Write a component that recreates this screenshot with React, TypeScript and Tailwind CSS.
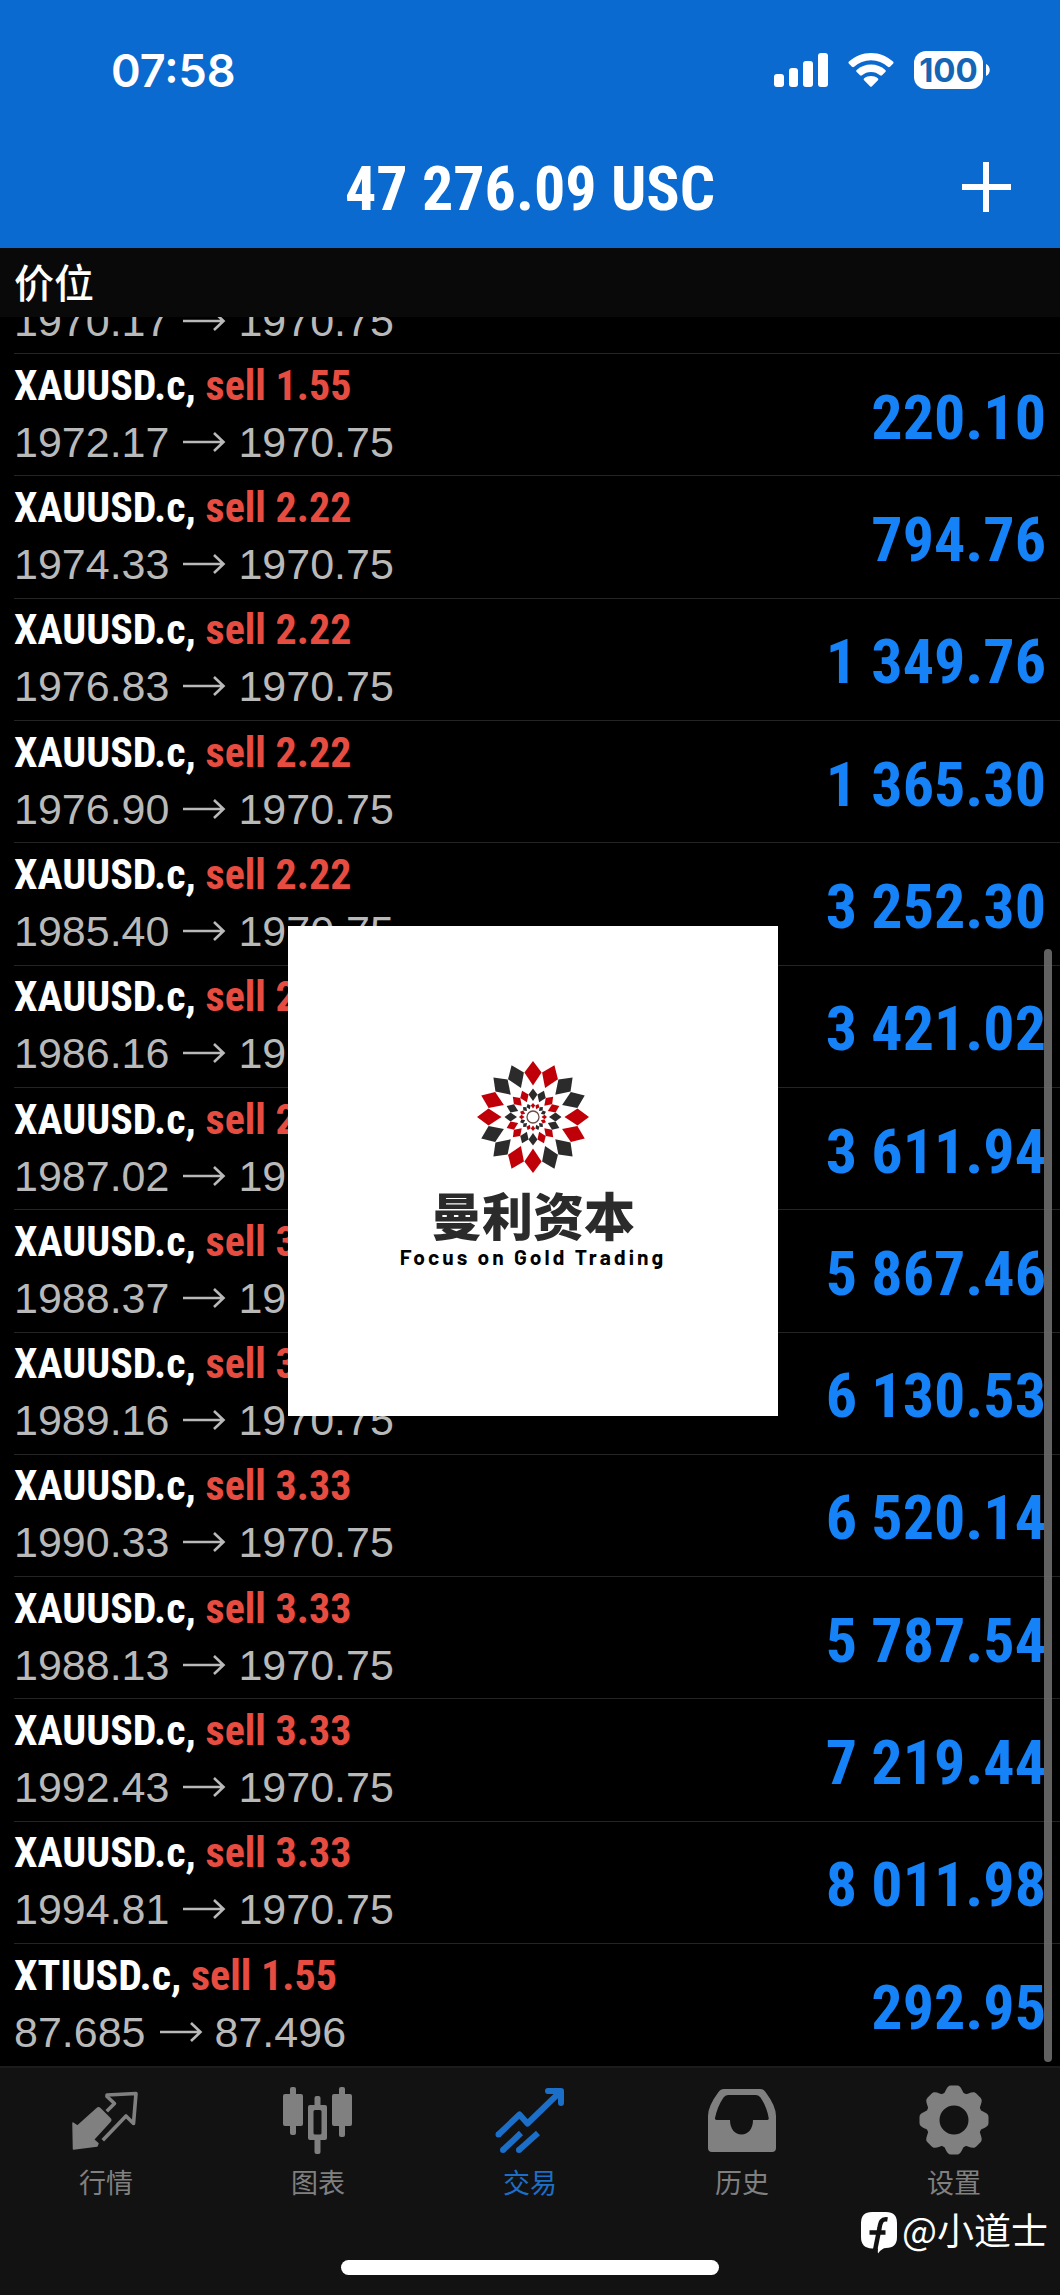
import type { ReactNode } from "react";

type Order = {
  symbol: string;
  side: string;
  open: string;
  current: string;
  profit: string;
};

const sell = (lots: string, open: string, profit: string): Order => ({
  symbol: "XAUUSD.c,",
  side: `sell ${lots}`,
  open,
  current: "1970.75",
  profit,
});

const orders: Order[] = [
  sell("1.55", "1972.17", "220.10"),
  sell("2.22", "1974.33", "794.76"),
  sell("2.22", "1976.83", "1 349.76"),
  sell("2.22", "1976.90", "1 365.30"),
  sell("2.22", "1985.40", "3 252.30"),
  sell("2.22", "1986.16", "3 421.02"),
  sell("2.22", "1987.02", "3 611.94"),
  sell("3.33", "1988.37", "5 867.46"),
  sell("3.33", "1989.16", "6 130.53"),
  sell("3.33", "1990.33", "6 520.14"),
  sell("3.33", "1988.13", "5 787.54"),
  sell("3.33", "1992.43", "7 219.44"),
  sell("3.33", "1994.81", "8 011.98"),
  {
    symbol: "XTIUSD.c,",
    side: "sell 1.55",
    open: "87.685",
    current: "87.496",
    profit: "292.95",
  },
];

function SignalIcon() {
  return (
    <svg className="h-9 w-[54px]" viewBox="0 0 54 36" fill="currentColor" aria-hidden="true">
      <rect x="0" y="22" width="10" height="13" rx="3" />
      <rect x="15" y="16" width="9" height="19" rx="3" />
      <rect x="29" y="9" width="10" height="26" rx="3" />
      <rect x="44" y="1" width="10" height="34" rx="3" />
    </svg>
  );
}

function WifiIcon() {
  return (
    <svg className="h-9 w-[46px]" viewBox="0 0 46 36" fill="currentColor" aria-hidden="true">
      <path d="M23 1C14.500 1 7 4.300 1 9.500C.3 10.200.3 11 1 11.700L4 14.700C4.700 15.300 5.400 15.300 6.100 14.700C10.800 10.600 16.600 8.300 23 8.300C29.400 8.300 35.200 10.600 39.900 14.700C40.600 15.300 41.300 15.300 42 14.700L45 11.700C45.700 11 45.700 10.200 45 9.500C39 4.300 31.500 1 23 1Z" />
      <path d="M23 12.500C17.500 12.500 12.600 14.500 8.700 17.900C8 18.500 8 19.300 8.700 20L12 23.200C12.600 23.800 13.300 23.800 14 23.300C16.500 21.200 19.600 20 23 20C26.400 20 29.500 21.200 32 23.300C32.700 23.800 33.400 23.800 34 23.200L37.300 20C38 19.300 38 18.500 37.300 17.900C33.400 14.500 28.500 12.500 23 12.500Z" />
      <path d="M23 24C20.400 24 18.100 24.900 16.200 26.300C15.500 26.900 15.500 27.600 16.100 28.200L22 34.300C22.700 35 23.300 35 24 34.300L29.900 28.200C30.500 27.600 30.500 26.900 29.800 26.300C27.900 24.900 25.600 24 23 24Z" />
    </svg>
  );
}

function Battery() {
  return (
    <div className="flex items-center gap-[3px]">
      <span className="flex h-[38px] w-[69px] items-center justify-center rounded-xl bg-white text-[33px] leading-none font-bold text-[#1565b4]">
        100
      </span>
      <svg className="h-3 w-1" viewBox="0 0 4 12" fill="currentColor" aria-hidden="true">
        <path d="M0 0C5 2 5 10 0 12Z" />
      </svg>
    </div>
  );
}

function QuotesIcon() {
  return (
    <svg className="size-[72px]" viewBox="0 0 72 72" aria-hidden="true">
      <path
        d="M3 39L7.500 42L27 24.500Q28.500 23 30 24.500L40 34.500Q41.500 36 40 37.500L23.500 55.500L28 59.500L27 62L3.500 65Z"
        fill="currentColor"
        stroke="currentColor"
        strokeWidth="1.500"
        strokeLinejoin="round"
      />
      <path
        d="M38 26L44.500 19.500L37 12.500L37 11L66 9.500L63.500 39.500L56 32L34 55"
        fill="none"
        stroke="currentColor"
        strokeWidth="3.600"
        strokeLinejoin="round"
        strokeLinecap="square"
      />
    </svg>
  );
}

function ChartIcon() {
  return (
    <svg className="size-[72px]" viewBox="0 0 72 72" fill="currentColor" aria-hidden="true">
      <rect x="8" y="3" width="6" height="48" rx="2" />
      <rect x="1" y="10" width="20" height="32" rx="2" />
      <rect x="57" y="3" width="6" height="50" rx="2" />
      <rect x="50" y="10" width="20" height="32" rx="2" />
      <rect x="32.500" y="12" width="6" height="12" rx="2" />
      <rect x="32.500" y="54" width="6" height="16" rx="2" />
      <path
        fillRule="evenodd"
        d="M28 21H43Q45 21 45 23V54Q45 56 43 56H28Q26 56 26 54V23Q26 21 28 21ZM33 26Q31.500 26 31.500 27.500V49Q31.500 50.500 33 50.500H38Q39.500 50.500 39.500 49V27.500Q39.500 26 38 26Z"
      />
    </svg>
  );
}

function TradeIcon() {
  return (
    <svg
      className="size-[72px]"
      viewBox="0 0 72 72"
      fill="none"
      stroke="currentColor"
      strokeWidth="6"
      strokeLinejoin="round"
      aria-hidden="true"
    >
      <path d="M4 51L25.500 30.500L33.500 39.500L66 8" />
      <path d="M54 7H67V19" strokeLinecap="round" />
      <path d="M9 66L27 49" strokeLinecap="butt" />
      <path d="M25 66L44 49" strokeLinecap="butt" />
      <path d="M9 66h0M25 66h0M4.500 50.500h0" strokeLinecap="round" />
    </svg>
  );
}

function HistoryIcon() {
  return (
    <svg className="size-[72px]" viewBox="0 0 72 72" fill="currentColor" aria-hidden="true">
      <path
        fillRule="evenodd"
        d="M18 5H54Q57.500 5 59.500 8Q70 22 70 32V64Q70 68 66 68H6Q2 68 2 64V32Q2 22 12.500 8Q14.500 5 18 5ZM22 11Q19 11 17.500 13.500C13 20 10.500 27 9 34Q8.700 36 10.500 36H24C24 45 29 50.500 35.500 50.500C42 50.500 47 45 47 36H61.500Q63 36 62.700 34C61.500 27 59 20 54.500 13.500Q53 11 50 11Z"
      />
    </svg>
  );
}

const gearAngles = [0, 45, 90, 135, 180, 225, 270, 315];

function SettingsIcon() {
  return (
    <svg className="size-[72px]" viewBox="0 0 72 72" aria-hidden="true">
      <circle cx="36" cy="36" r="21.500" fill="none" stroke="currentColor" strokeWidth="14" />
      {gearAngles.map((angle) => (
        <path
          key={angle}
          transform={`rotate(${angle} 36 36)`}
          fill="currentColor"
          d="M24 12C28 9 28 1.500 33 1.500H39C44 1.500 44 9 48 12L42 16H30Z"
        />
      ))}
    </svg>
  );
}

const petals = Array.from({ length: 16 }, (_, i) => i);

function Rosette() {
  return (
    <svg className="size-28" viewBox="-56 -56 112 112" role="img" aria-label="曼利资本">
      {petals.map((i) => {
        const even = i % 4 < 2;
        const first = even ? "#c00008" : "#2b2b2b";
        const second = even ? "#2b2b2b" : "#c00008";
        return (
          <g key={i} transform={`rotate(${i * 22.5})`}>
            <path d="M0 -56L8.600 -44.500L0 -31.500L-8.600 -44.500Z" fill={first} />
            <path d="M0 -28.500L4.500 -22.500L0 -16L-4.500 -22.500Z" fill={second} />
            <path d="M0 -14L2.200 -11.500L0 -8.500L-2.200 -11.500Z" fill={first} />
          </g>
        );
      })}
      <circle r="6" fill="none" stroke="#6b4a4a" strokeWidth="1.300" />
    </svg>
  );
}

function ArrowRight() {
  return (
    <svg
      className="h-6 w-[45px]"
      viewBox="0 0 45 24"
      fill="none"
      stroke="currentColor"
      strokeWidth="2.600"
      aria-label="→"
      role="img"
    >
      <path d="M2 12H42M33 3L42.500 12L33 21" />
    </svg>
  );
}

function PriceMove({ open, current }: { open: string; current: string }) {
  return (
    <p className="flex items-center gap-3 text-[43px] leading-[52px] text-[#b9b9b9]">
      <span>{open}</span>
      <ArrowRight />
      <span>{current}</span>
    </p>
  );
}

function OrderRow({ order }: { order: Order }) {
  return (
    <li className="ml-3.5 flex min-h-[122px] flex-1 items-center justify-between border-b border-[#242424] pr-3.5 last:border-b-0">
      <div className="flex flex-col gap-1.5">
        <p className="font-['Roboto_Condensed','Roboto',sans-serif] text-[42px] leading-[48px] font-bold whitespace-nowrap text-white">
          {order.symbol} <span className="text-[#e74c41]">{order.side}</span>
        </p>
        <PriceMove open={order.open} current={order.current} />
      </div>
      <p className="pt-1.5 font-['Roboto_Condensed','Roboto',sans-serif] text-[62px] leading-[72px] font-bold whitespace-nowrap text-[#1682f8]">
        {order.profit}
      </p>
    </li>
  );
}

function Tab({ label, active, children }: { label: string; active?: boolean; children: ReactNode }) {
  return (
    <button
      type="button"
      aria-current={active ? "page" : undefined}
      className={
        active
          ? "flex flex-1 flex-col items-center gap-2.5 text-[#1b6fc9]"
          : "flex flex-1 flex-col items-center gap-2.5 text-[#808080]"
      }
    >
      {children}
      <span className="text-[27px] leading-8">{label}</span>
    </button>
  );
}

export default function App() {
  return (
    <div className="flex min-h-screen flex-col bg-black font-['Liberation_Sans','Noto_Sans_CJK_SC',sans-serif] text-white">
      <header className="bg-[#0a6ad0] pb-1.5">
        <div className="flex h-[132px] items-start justify-between pt-[43px] pr-[70px] pl-[111px] font-['Inter',sans-serif]">
          <time className="text-[45px] leading-[56px] font-semibold">07:58</time>
          <div className="flex h-[54px] items-center gap-5">
            <SignalIcon />
            <WifiIcon />
            <Battery />
          </div>
        </div>
        <div className="grid h-[110px] grid-cols-[1fr_auto_1fr] items-center">
          <h1 className="col-start-2 pt-1 font-['Roboto_Condensed','Roboto',sans-serif] text-[62px] leading-[72px] font-bold">
            47 276.09 USC
          </h1>
          <button type="button" aria-label="新订单" className="justify-self-end pr-12">
            <svg className="size-[52px]" viewBox="0 0 52 52" stroke="currentColor" strokeWidth="6" aria-hidden="true">
              <path d="M2 26H51M26 1V51" />
            </svg>
          </button>
        </div>
      </header>

      <main className="relative flex flex-1 flex-col">
        <h2 className="flex h-[69px] items-center bg-[#090909] px-3.5 pb-1 font-['Noto_Sans_CJK_SC',sans-serif] text-[40px] leading-none font-medium">
          价位
        </h2>
        <div className="ml-3.5 flex h-[37px] flex-col justify-end overflow-hidden border-b border-[#242424] pb-1.5">
          <PriceMove open="1970.17" current="1970.75" />
        </div>
        <ul className="flex flex-1 flex-col">
          {orders.map((order) => (
            <OrderRow key={order.open} order={order} />
          ))}
        </ul>

        <div className="absolute top-[701px] right-2 bottom-1 w-2 rounded-full bg-[#6b6b6b]/90" />

        <figure className="absolute top-[678px] left-[288px] flex h-[490px] w-[490px] flex-col items-center bg-white pt-[135px]">
          <Rosette />
          <figcaption className="flex flex-col items-center">
            <span className="mt-2.5 font-['Noto_Sans_CJK_SC',sans-serif] text-[51px] leading-[62px] font-black text-[#2b2b2b]">
              曼利资本
            </span>
            <span className="font-['Barlow','Inter',sans-serif] text-[21px] leading-6 font-bold tracking-[3px] whitespace-nowrap text-black">
              Focus on Gold Trading
            </span>
          </figcaption>
        </figure>
      </main>

      <nav className="relative flex h-[229px] flex-col justify-between border-t-2 border-[#1b1b1b] bg-[#121212] pt-4 pb-5 font-['Noto_Sans_CJK_SC',sans-serif]">
        <div className="flex">
          <Tab label="行情">
            <QuotesIcon />
          </Tab>
          <Tab label="图表">
            <ChartIcon />
          </Tab>
          <Tab label="交易" active>
            <TradeIcon />
          </Tab>
          <Tab label="历史">
            <HistoryIcon />
          </Tab>
          <Tab label="设置">
            <SettingsIcon />
          </Tab>
        </div>
        <div className="h-[15px] w-[378px] self-center rounded-full bg-white" />
        <div className="absolute right-3 bottom-9 flex items-center gap-1 text-[37px] leading-[44px]">
          <svg className="h-11 w-[38px]" viewBox="0 0 38 44" aria-hidden="true">
            <path
              d="M12 1H26Q37 1 37 12V26Q37 37 26 37Q22 37 18 42.500Q17.500 40 18 37.500H12Q1 37 1 26V12Q1 1 12 1Z"
              fill="#fff"
            />
            <path
              d="M27.500 8.500C21.500 7.500 20.500 11 19.500 17L14.500 42M9.500 21.500H25.500"
              fill="none"
              stroke="#121212"
              strokeWidth="4.500"
            />
          </svg>
          <span className="pb-2">@小道士</span>
        </div>
      </nav>
    </div>
  );
}
